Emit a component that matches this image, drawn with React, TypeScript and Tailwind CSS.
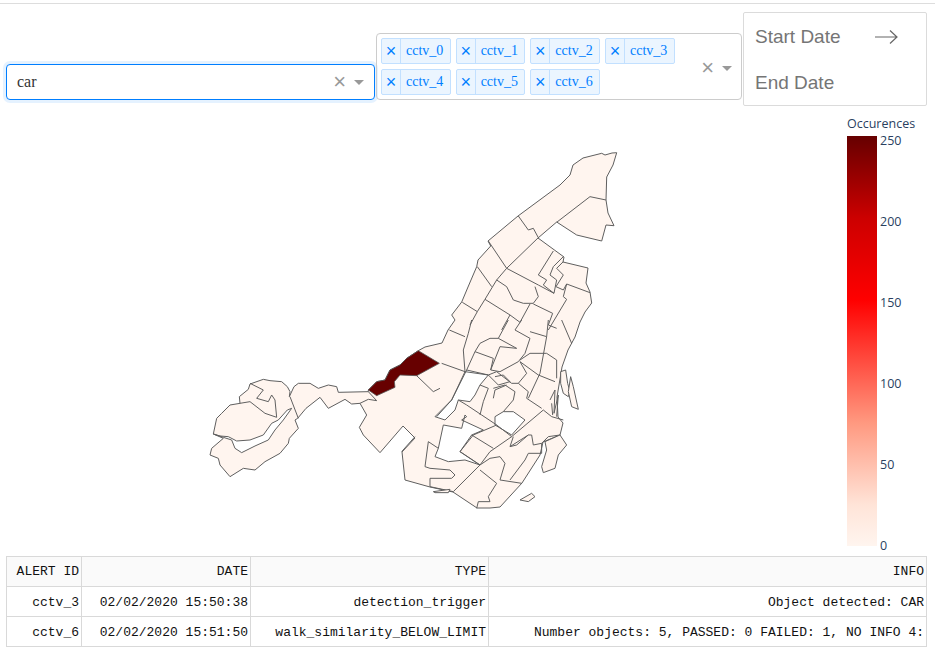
const conv = (s: string, ox: number, oy: number) =>
  s.split(" ").map((p) => {
    const [x, y] = p.split(",").map(Number);
    return `${ox + x / 3},${oy + y / 3}`;
  }).join(" ");

const east = "616.7,152.7 613,165 606.7,177 606,200 608,213 614,225.7 606,225 601.7,241 576.7,235 556.7,222 538,238 564,257 563,262 588,268 586,283 590,292 591.7,303 585,312 580,322 575,337 568,350 562,367 557,397 558,417 563,423 560,435 543,442 540,455 522,483 500,507 490,508 477,508 453,492 430,487 405,480 402,452 415,438 403,426";
const west = "540,338 490,285 478,262 500,225 480,190 455,192 435,178 385,205 360,172 318,205 293,235 285,240 295,265 268,295 265,310 240,340 195,365 165,390 130,385 90,410 60,375 55,355 30,345 35,325 70,295 40,282 50,235 65,220 90,195 120,190 118,170 145,148 150,132 190,118 210,122 245,125 262,140 270,155 268,170 282,140 295,130 330,130 355,145 385,135 410,140 415,157 505,155 505,150 530,125 555,120 570,90 600,75 620,55 655,32";
const north = "425,347 442,343 448,330 455,320 451.7,315 461.7,302 468,287 476.7,266.7 478,260 490.7,246 488,241 518,216 560,185 570,175 573,165 583,158 601.7,153.3 605,155 612,153";
const main = `${east} ${conv(west, 200, 340)} ${north}`;
const dark = conv("505,150 530,125 555,120 570,90 600,75 620,55 655,32 718,70 650,107 600,105 583,125 585,142 530,167", 200, 340);

const z4 = [
  "355,228 385,270 400,265 415,293 320,385 265,303",
  "470,247 570,170 618,180",
  "320,385 290,420 255,478 232,515 210,555",
  "232,380 275,440",
  "187,487 232,515",
  "320,385 415,435 462,460",
  "460,333 415,405 440,420 430,435 462,460 470,420 450,405 460,380 490,350",
  "490,365 470,385 490,405 468,440 490,450 500,432 570,458",
  "500,432 490,470 500,478 445,570",
  "290,420 320,440 340,480 370,490 400,490 415,470 405,440",
  "255,478 330,525 360,547 390,492",
  "330,525 305,570",
  "400,492 458,520 445,555 470,565",
];

const z5 = [
  "148,30 195,50",
  "215,0 205,40 190,90 195,155 155,240 110,290",
  "125,130 195,155 265,165",
  "325,0 295,55 270,55 240,70 225,95 280,115 272,150 300,155",
  "225,95 200,150",
  "295,55 350,85 300,80 272,150",
  "365,0 345,30 390,55 375,100 355,125 300,155",
  "390,35 440,50 445,0",
  "440,50 420,160 385,235",
  "360,120 390,100 440,100 470,120 470,175",
  "360,125 415,165 465,185",
  "360,125 380,160 355,190 385,215 380,235 425,265",
  "265,165 290,155 335,190 355,190",
  "285,170 310,165 330,185 295,195 265,165",
  "515,70 485,0",
  "240,195 265,205 250,245 240,285",
  "280,205 315,195 345,215 340,240 310,275",
  "280,235 285,210 320,195",
  "175,240 200,255 245,285 290,315",
  "85,365 75,440 90,445 150,450 165,465 155,475 90,475 90,500",
  "85,365 115,385",
  "240,435 160,515 90,500",
  "240,450 290,490 265,530 270,545 235,545 230,565",
  "240,435 270,415 300,410 315,430 300,480 365,490",
  "335,350 270,395 240,435",
  "330,380 385,345 395,345 400,375 425,370 425,400 385,400 375,420 330,480",
  "335,350 430,270 455,290 490,300",
  "340,350 330,380 350,375 385,345",
  "425,370 445,350 480,345",
  "215,345 280,385",
  "180,395 220,345 290,315 335,350",
  "180,395 240,435",
  "45,350 5,395",
];

const z5Holes = [
  "200,150 265,165 240,195 225,225 210,245 175,240 165,270 135,300 105,290 155,240",
  "130,315 185,325 195,285 200,290 185,300 250,330 215,345 180,395 240,435 195,420 145,425 105,410 115,385",
  "285,290 310,275 340,275 375,300 335,345 285,315",
];

const z5Islands = [
  "435,365 480,345 500,375 475,405 465,445 430,458 425,440 440,390",
  "482,155 497,150 503,190 510,215 505,230 490,220 482,190",
  "512,170 520,200 535,268 515,260 505,215",
  "360,540 395,520 405,530 385,545",
  "100,515 150,508 145,518 105,518",
];

const z5Lines = [
  "450,240 465,210 462,280 475,225 470,290",
  "455,250 458,285",
];

const z3 = [
  "120,190 150,185 195,220 230,232",
  "230,232 225,180 215,165 205,185 170,175 190,150 150,130",
  "270,170 295,235",
  "480,190 505,178 530,182 505,155",
  "650,107 700,155 720,145",
];

const z3River = "40,282 70,292 95,300 105,325 125,338 165,318 205,300 225,270 250,240 275,205 262,210 235,240 215,250 190,285 150,300 110,303 85,290 60,288";

const pts = "fill-none stroke-[#5f5f5f] stroke-[3]";

function Chip({ label }: { label: string }) {
  return (
    <div className="flex h-[26px] w-[69.670px] items-stretch rounded-[2px] border border-[#c2e0ff] bg-[#ebf5ff] text-[#007eff]">
      <span className="flex w-[19px] items-center justify-center border-r border-[#c2e0ff] font-['Liberation_Sans',sans-serif] text-[18px] leading-none">×</span>
      <span className="flex-1 pl-[5px] text-[14px] leading-[24px]">{label}</span>
    </div>
  );
}

function Controls() {
  return (
    <div className="flex items-center gap-[8px] text-[#999]">
      <span className="font-['Liberation_Sans',sans-serif] text-[22px] leading-none">×</span>
      <span className="h-0 w-0 border-x-[5px] border-t-[5px] border-x-transparent border-t-[#999]" />
    </div>
  );
}

const rows = [
  ["cctv_3", "02/02/2020 15:50:38", "detection_trigger", "Object detected: CAR"],
  ["cctv_6", "02/02/2020 15:51:50", "walk_similarity_BELOW_LIMIT", "Number objects: 5, PASSED: 0 FAILED: 1, NO INFO 4:"],
];

export default function App() {
  return (
    <div className="h-[647px] w-[935px] overflow-hidden bg-white font-['Liberation_Serif',serif] text-[#333]">
      <div className="mt-[3px] h-px bg-[#dddddd]" />
      <div className="mt-[8px] flex items-end pl-[6px]">
        <div className="mb-[6px] flex h-[36px] w-[369px] items-center justify-between rounded-[4px] border border-[#007eff] bg-white pr-[10px] pl-[10px] shadow-[0_0_0_3px_rgba(0,126,255,0.1)]">
          <span className="text-[16px]">car</span>
          <Controls />
        </div>
        <div className="mb-[6px] ml-px flex h-[67px] w-[366px] items-center justify-between rounded-[4px] border border-[#cccccc] pr-[9px] pl-[4px]">
          <div className="flex w-[300px] flex-wrap gap-x-[5px] gap-y-[5.500px]">
            {["cctv_0", "cctv_1", "cctv_2", "cctv_3", "cctv_4", "cctv_5", "cctv_6"].map((c) => (
              <Chip key={c} label={c} />
            ))}
          </div>
          <div className="mt-[3px]"><Controls /></div>
        </div>
        <div className="ml-px flex h-[94px] w-[184px] flex-col rounded-[2px] border border-[#dbdbdb] pt-[10px] pl-[11px] font-['Liberation_Sans',sans-serif] text-[19px] text-[#757575]">
          <div className="flex h-[28px] items-center">
            <span className="w-[119px]">Start Date</span>
            <svg width="24" height="16" viewBox="0 0 24 16" className="text-[#666]">
              <path d="M1 8H23M16 1.500L23 8L16 14.500" fill="none" stroke="currentColor" strokeWidth="1.200" />
            </svg>
          </div>
          <div className="mt-[18px] flex h-[28px] items-center">End Date</div>
        </div>
      </div>
      <div className="flex h-[450px] items-start">
        <svg width="840" height="450" viewBox="0 106 840 450" className="block shrink-0">
          <polygon points={main} className="fill-[#fff5ef] stroke-[#5f5f5f] stroke-[1]" />
          <g transform="translate(400 140) scale(0.3333)">
            {z4.map((p) => <polyline key={p} points={p} className={pts} />)}
          </g>
          <g transform="translate(400 320) scale(0.3333)">
            {z5Holes.map((p) => <polygon key={p} points={p} className="fill-white stroke-[#5f5f5f] stroke-[3]" />)}
            {z5.map((p) => <polyline key={p} points={p} className={pts} />)}
            {z5Islands.map((p) => <polygon key={p} points={p} className="fill-[#fff5ef] stroke-[#5f5f5f] stroke-[3]" />)}
            {z5Lines.map((p) => <polyline key={p} points={p} className={pts} />)}
          </g>
          <g transform="translate(200 340) scale(0.3333)">
            <polygon points={z3River} className="fill-white stroke-[#5f5f5f] stroke-[3]" />
            {z3.map((p) => <polyline key={p} points={p} className={pts} />)}
          </g>
          <polygon points={dark} className="fill-[#670000] stroke-[#555] stroke-[0.8]" />
        </svg>
        <div className="ml-[7px] flex flex-col font-['Open_Sans',sans-serif] text-[12.500px] text-[#2a3f5f]">
          <div className="mt-[10px] h-[20px] whitespace-nowrap leading-[16px]">Occurences</div>
          <div className="flex">
            <div className="h-[410px] w-[30px] bg-[linear-gradient(to_bottom,#660000_0%,#cc0000_20%,#ff0000_40%,#ff9980_70%,#ffe4d8_90%,#fff5ef_100%)]" />
            <div className="relative ml-[3px] h-[410px] w-[30px]">
              {[["250", "top-[-3px]"], ["200", "top-[78px]"], ["150", "top-[159px]"], ["100", "top-[240px]"], ["50", "top-[321px]"], ["0", "top-[402px]"]].map(([t, c]) => (
                <span key={t} className={`absolute left-0 leading-[16px] ${c}`}>{t}</span>
              ))}
            </div>
          </div>
        </div>
      </div>
      <table className="ml-[6px] w-[921px] table-fixed border-collapse font-['Liberation_Mono',monospace] text-[13px] text-[#111]">
        <colgroup>
          <col className="w-[75px]" />
          <col className="w-[169px]" />
          <col className="w-[238px]" />
          <col />
        </colgroup>
        <thead>
          <tr className="h-[30px] bg-[#fafafa]">
            {["ALERT ID", "DATE", "TYPE", "INFO"].map((h) => (
              <th key={h} className="overflow-hidden border border-[#d9d9d9] pt-[1px] pr-[2px] text-right font-normal whitespace-nowrap">{h}</th>
            ))}
          </tr>
        </thead>
        <tbody>
          {rows.map((r) => (
            <tr key={r[0]} className="h-[30px]">
              {r.map((c) => (
                <td key={c} className="overflow-hidden border border-[#d9d9d9] pt-[2px] pr-[2px] text-right whitespace-nowrap">{c}</td>
              ))}
            </tr>
          ))}
        </tbody>
      </table>
    </div>
  );
}
